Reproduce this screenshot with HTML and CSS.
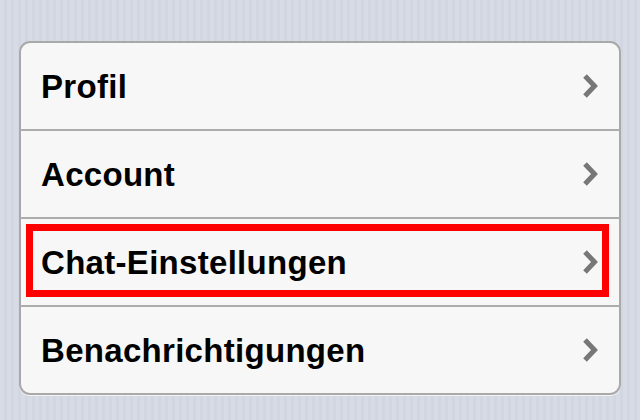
FILE: index.html
```html
<!DOCTYPE html>
<html lang="de">
<head>
  <meta charset="UTF-8">
  <meta name="viewport" content="width=device-width, initial-scale=1.0">
  <title>Einstellungen</title>
  <link rel="stylesheet" href="styles.css">
</head>
<body>
  <ul class="settings-group">
    <li class="settings-row">
      <span class="row-label">Profil</span>
      <svg class="chevron" viewBox="0 0 16 26"><polyline points="3,3 12.5,13 3,23"/></svg>
    </li>
    <li class="settings-row">
      <span class="row-label">Account</span>
      <svg class="chevron" viewBox="0 0 16 26"><polyline points="3,3 12.5,13 3,23"/></svg>
    </li>
    <li class="settings-row is-marked">
      <span class="row-label">Chat-Einstellungen</span>
      <svg class="chevron" viewBox="0 0 16 26"><polyline points="3,3 12.5,13 3,23"/></svg>
    </li>
    <li class="settings-row">
      <span class="row-label">Benachrichtigungen</span>
      <svg class="chevron" viewBox="0 0 16 26"><polyline points="3,3 12.5,13 3,23"/></svg>
    </li>
  </ul>
</body>
</html>
```

FILE: styles.css
```css
body {
  margin: 0;
  padding: 41px 19px;
  height: 420px;
  box-sizing: border-box;
  overflow: hidden;
  font-family: "Liberation Sans", Arial, sans-serif;
  background-color: #d4d9e3;
  background-image: repeating-linear-gradient(90deg, #d6dbe5 0 4px, #d1d6e1 4px 7px);
}

.settings-group {
  list-style: none;
  margin: 0;
  padding: 0;
  background: #f7f7f7;
  border: 2px solid #a9a9a9;
  border-radius: 11px;
  box-shadow: 0 1px 0 rgba(255, 255, 255, 0.7);
  overflow: hidden;
}

.settings-row {
  position: relative;
  display: flex;
  align-items: center;
  justify-content: space-between;
  height: 86px;
  padding: 0 21px 0 20px;
  border-top: 2px solid #acacac;
}

.settings-row:first-child {
  border-top: none;
}

.row-label {
  font-size: 33px;
  font-weight: bold;
  letter-spacing: 0.3px;
  color: #000;
  padding-top: 1px;
}

.chevron {
  width: 16px;
  height: 26px;
}

.chevron polyline {
  fill: none;
  stroke: #777;
  stroke-width: 5;
  stroke-linejoin: miter;
}

/* red highlight frame drawn over the row */
.is-marked::after {
  content: "";
  position: absolute;
  top: 5px;
  left: 5px;
  right: 10px;
  bottom: 8px;
  border: 7px solid #ff0000;
}
```
